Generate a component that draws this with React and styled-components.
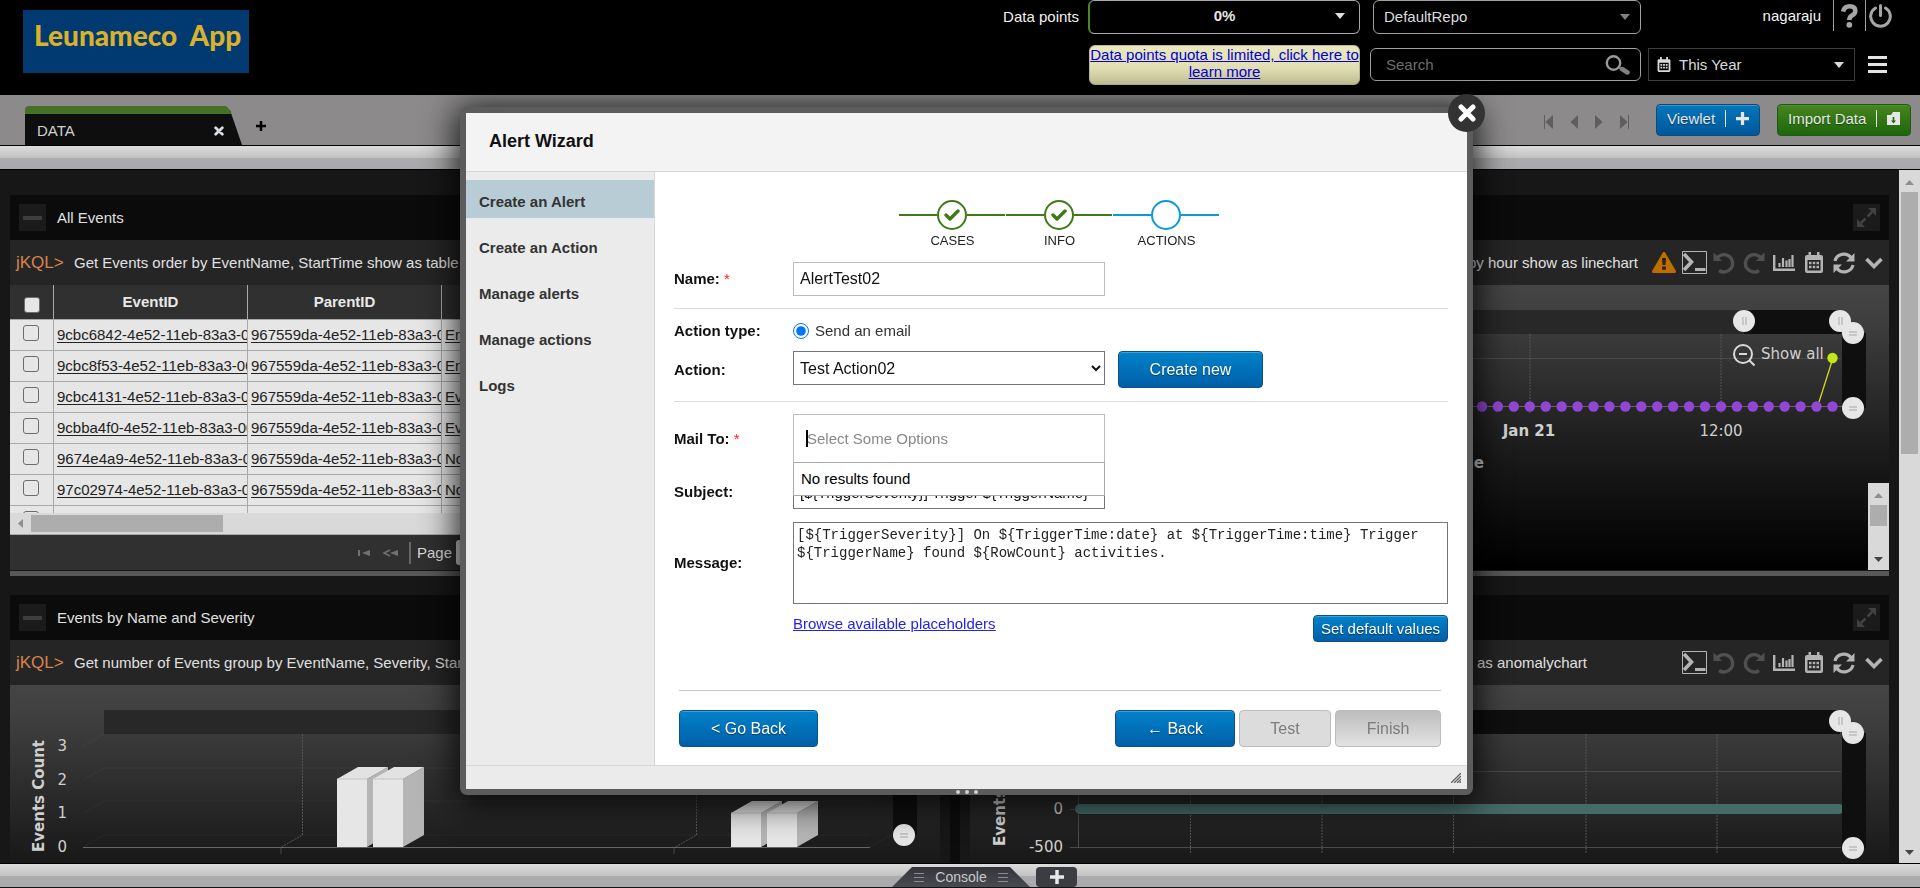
import React from "react";
import styled, { createGlobalStyle, css } from "styled-components";

const GlobalStyle = createGlobalStyle`
  *, *::before, *::after { box-sizing: border-box; }
  body {
    margin: 0;
    background: #171717;
    font: 15px/18px "Liberation Sans", Arial, sans-serif;
    color: #111;
  }
  button, input, select, textarea { font: inherit; margin: 0; }
`;

const band = "linear-gradient(#dcdcdc 0, #c2c2c2 12px, #acacae 12px, #a9a9ab 24px)";

const Page = styled.div`
  display: flex;
  flex-direction: column;
  height: 100vh;
  overflow: hidden;
`;

/* ---------- header ---------- */

const Header = styled.header`
  display: flex;
  flex: none;
  height: 95px;
  background: #000;
  color: #f2f2f2;
`;

const Logo = styled.div`
  width: 226px;
  height: 63px;
  margin: 10px auto 0 23px;
  padding: 8px 0 0 11px;
  background: #003a70;
  color: #d9b12c;
  font: 900 28px/34px Lato, "Open Sans", sans-serif;
  white-space: pre;
`;

const PointsLabel = styled.div`
  padding: 8px 9px 0 0;
`;

const HeaderColumn = styled.div`
  display: flex;
  flex-direction: column;
  align-items: flex-end;
  width: ${(p) => p.$width}px;
  margin-right: ${(p) => p.$gap || 0}px;
`;

const Meter = styled.button`
  display: flex;
  align-items: center;
  width: 100%;
  height: 34px;
  padding: 0 14px 2px 24px;
  border: 1px solid #a8a8a8;
  border-left: 2px solid #4d8a26;
  border-radius: 6px;
  background: #000;
  color: #e6e6e6;
  font-weight: bold;
  span { flex: 1; }
`;

const Notice = styled.a`
  width: 271px;
  height: 40px;
  margin-top: 11px;
  border: 1px solid #b9b99a;
  border-radius: 6px;
  background: linear-gradient(#e9e8bb, #e2deb4 60%, #c9c79c);
  color: #0000d8;
  line-height: 17px;
  text-align: center;
`;

const Field = styled.div`
  display: flex;
  align-items: center;
  width: ${(p) => p.$width};
  height: ${(p) => p.$height}px;
  margin-top: ${(p) => p.$top || 0}px;
  padding: 0 10px 0 ${(p) => p.$left || 10}px;
  border: 1px solid ${(p) => p.$line || "#a0a0a0"};
  border-radius: ${(p) => (p.$square ? 0 : 6)}px;
  select, input {
    flex: 1;
    min-width: 0;
    padding: 0;
    border: 0;
    outline: 0;
    appearance: none;
    background: #000;
    color: #dcdcdc;
  }
  input::placeholder { color: #6e6e6e; }
`;

const UserRow = styled.div`
  display: flex;
  align-items: center;
  height: 31px;
  padding-right: 25px;
`;

const UserName = styled.span`
  padding-right: 12px;
`;

const HeaderIcon = styled.button`
  display: flex;
  align-items: center;
  justify-content: center;
  width: ${(p) => p.$width}px;
  height: 31px;
  padding: 0;
  border: 0;
  border-left: 1px solid #a0a0a0;
  background: none;
`;

const DateRow = styled.div`
  display: flex;
  align-items: center;
  width: 100%;
  margin-top: 17px;
`;

const DateField = styled(Field)`
  gap: 8px;
`;

const MenuButton = styled.button`
  display: flex;
  flex-direction: column;
  gap: 4px;
  width: 19px;
  margin-left: 13px;
  padding: 0;
  border: 0;
  background: none;
  i { height: 3px; background: #e4e4e4; }
`;

/* ---------- tab bar ---------- */

const TabBar = styled.nav`
  display: flex;
  flex: none;
  height: 51px;
  padding: 0 9px 0 25px;
  border-bottom: 1px solid #000;
  background: #8c8a8b;
`;

const Tab = styled.div`
  display: flex;
  align-items: center;
  justify-content: space-between;
  width: 217px;
  height: 39px;
  margin-top: 11px;
  padding: 2px 18px 0 12px;
  border-top: 8px solid #457126;
  border-radius: 4px 0 0 0;
  background: #0e0e0e;
  clip-path: polygon(0 0, calc(100% - 16px) 0, calc(100% - 12px) 4px, 100% 100%, 0 100%);
  color: #d0d0d0;
`;

const PlainButton = styled.button`
  display: flex;
  padding: 0;
  border: 0;
  background: none;
`;

const AddTab = styled(PlainButton)`
  align-self: center;
  margin: 12px auto 0 14px;
`;

const Pager = styled.div`
  display: flex;
  align-items: center;
  gap: 15px;
  margin: 4px 27px 0 0;
`;

const BarButton = styled.button`
  display: flex;
  align-items: center;
  justify-content: space-between;
  width: ${(p) => p.$width}px;
  height: 32px;
  margin: 9px 0 0 ${(p) => p.$gap || 0}px;
  padding: 0 10px 3px;
  border: 1px solid ${(p) => (p.$green ? "#1d5c10" : "#0d4a7c")};
  border-radius: 4px;
  background: ${(p) => (p.$green ? "linear-gradient(#47861f, #1d650c)" : "linear-gradient(#0577bb, #00579b)")};
  box-shadow: inset 0 1px ${(p) => (p.$green ? "#4f8f2c" : "#3d94d2")};
  color: #e6e6e6;
  text-shadow: 0 1px 1px rgba(0, 0, 0, 0.4);
`;

const BarDivider = styled.i`
  width: 1px;
  height: 17px;
  background: #e6e6e6;
`;

const Band = styled.div`
  flex: none;
  height: 23px;
  background: ${band};
`;

/* ---------- dashboard ---------- */

const Workspace = styled.main`
  display: flex;
  flex: 1;
  min-height: 0;
  border-top: 1px solid #000;
  background: #171717;
`;

const Dashboard = styled.div`
  display: grid;
  flex: 1;
  grid-template-columns: minmax(0, 930fr) 30px minmax(0, 919fr);
  min-width: 0;
  padding: 25px 10px 0;
  overflow: hidden;
`;

const PanelColumn = styled.div`
  display: flex;
  flex-direction: column;
  gap: 19px;
`;

const Splitter = styled.div`
  width: 10px;
  margin: -25px auto 0;
  background: #0c0c0c;
`;

const Panel = styled.section`
  flex: none;
  border-bottom: 5px solid #585858;
`;

const PanelHead = styled.header`
  display: flex;
  align-items: center;
  gap: 11px;
  height: 45px;
  padding: 0 9px;
  background: #0b0b0b;
  color: #e0e0e0;
`;

const HeadTitle = styled.h2`
  margin: 0 auto 0 0;
  font-size: 15px;
  font-weight: normal;
`;

const HeadButton = styled.button`
  display: flex;
  align-items: center;
  justify-content: center;
  width: 27px;
  height: 27px;
  padding: 0;
  border: 0;
  background: #1b1b1b;
`;

const Query = styled.div`
  display: flex;
  align-items: center;
  height: 45px;
  padding-left: 6px;
  background: #252525;
  color: #e0e0e0;
  white-space: nowrap;
`;

const Prompt = styled.span`
  width: 58px;
  color: #d9834e;
  font-size: 17px;
`;

const QueryEnd = styled.span`
  flex: 1;
  padding-right: ${(p) => p.$gap}px;
  text-align: right;
`;

const ToolButton = styled(PlainButton)`
  align-items: center;
  justify-content: center;
  width: 30px;
  height: 45px;
`;

const PanelBody = styled.div`
  display: flex;
  flex-direction: column;
  align-items: ${(p) => (p.$end ? "flex-end" : "stretch")};
  height: 286px;
  overflow: hidden;
  border-bottom: 1px solid #171717;
  background: linear-gradient(#444, #404040 10%, #1a1a1a 60%, #000);
  svg { flex: none; }
`;

const TableClip = styled.div`
  height: 228px;
  overflow: hidden;
  background: #e6e6e6;
`;

const Table = styled.table`
  width: 100%;
  border-collapse: separate;
  border-spacing: 0;
  table-layout: fixed;
  th, td {
    padding: 0 3px;
    border-right: 1px solid #a9a9a9;
    border-bottom: 1px solid #a9a9a9;
    overflow: hidden;
    white-space: nowrap;
    text-align: left;
  }
  th {
    height: 35px;
    background: #303030;
    color: #e8e8e8;
    text-align: center;
  }
  td { height: 31px; color: #222; }
  a { color: inherit; text-underline-offset: 2px; }
`;

const Tick = styled.input`
  appearance: none;
  display: block;
  width: 16px;
  height: 16px;
  margin: ${(p) => (p.$head ? "6px 0 0 11px" : "0 0 4px 10px")} !important;
  border: 1px solid #6c6c6c;
  border-radius: 3px;
  background: #e6e6e6;
`;

const HScroll = styled.div`
  display: flex;
  align-items: center;
  gap: 8px;
  height: 22px;
  padding: 0 8px;
  border-bottom: 1px solid #a9a9a9;
  background: #d9d9d9;
  i { width: 192px; height: 17px; background: #adadad; }
`;

const TablePager = styled.div`
  display: flex;
  align-items: center;
  flex: 1;
  padding-left: 348px;
  background: #303030;
  color: #dadada;
  label { display: flex; align-items: center; gap: 4px; }
  input {
    width: 40px;
    height: 25px;
    border: 0;
    border-radius: 3px;
    background: #d9d9d9;
  }
`;

const PagerRule = styled.i`
  width: 2px;
  height: 22px;
  margin: 0 6px 0 11px;
  background: #666;
`;

const VScroll = styled.div`
  display: flex;
  flex-direction: column;
  align-items: center;
  flex: none;
  width: 21px;
  padding: 10px 2px 8px;
  background: #d9d9d9;
  i {
    width: 17px;
    height: ${(p) => p.$thumb}px;
    margin: 7px 0 auto;
    background: #adadad;
  }
`;

const InnerScroll = styled(VScroll)`
  align-self: flex-end;
  height: 87px;
`;

/* ---------- console bar ---------- */

const ConsoleBar = styled.footer`
  display: flex;
  flex: none;
  justify-content: center;
  gap: 6px;
  height: 25px;
  padding: 3px 0 0 49px;
  border-top: 1px solid #000;
  border-bottom: 1px solid #111;
  background: ${band};
`;

const ConsoleTab = styled.button`
  display: flex;
  align-items: center;
  justify-content: center;
  gap: 11px;
  width: 138px;
  height: 20px;
  padding: 0;
  border: 0;
  background: linear-gradient(#33353a, #484b51);
  clip-path: polygon(20px 0, calc(100% - 20px) 0, 100% 100%, 0 100%);
  color: #c9c9c9;
  font-size: 14px;
`;

const ConsoleAdd = styled(PlainButton)`
  align-items: center;
  justify-content: center;
  width: 41px;
  height: 20px;
  border-radius: 4px;
  background: #3b3d42;
`;

/* ---------- dialog ---------- */

const Overlay = styled.div`
  position: fixed;
  inset: 0;
  display: flex;
  align-items: flex-start;
  justify-content: center;
  padding: 107px 0 0 13px;
`;

const Dialog = styled.div`
  position: relative;
  width: 1013px;
  border: 6px solid #5c5c5c;
  border-radius: 7px;
  background: #fff;
  box-shadow: 0 4px 34px 4px rgba(0, 0, 0, 0.85);
`;

const CloseButton = styled.button`
  position: absolute;
  top: -19px;
  right: -18px;
  display: flex;
  align-items: center;
  justify-content: center;
  width: 37px;
  height: 38px;
  padding: 0;
  border: 0;
  border-radius: 50%;
  background: #333;
`;

const Grip = styled.div`
  position: absolute;
  bottom: -5px;
  left: 0;
  right: 0;
  display: flex;
  justify-content: center;
  gap: 5px;
  i { width: 4px; height: 4px; border-radius: 2px; background: #d0d0d0; }
`;

const DialogHead = styled.header`
  height: 59px;
  padding: 18px 23px;
  border-bottom: 1px solid #d6d6d6;
  background: #f3f3f3;
  h1 { margin: 0; font-size: 18px; line-height: 20px; }
`;

const DialogBody = styled.div`
  display: flex;
`;

const SideMenu = styled.nav`
  display: flex;
  flex-direction: column;
  gap: 8px;
  width: 189px;
  padding-top: 8px;
  border-right: 1px solid #d6d6d6;
  background: #ebebeb;
`;

const MenuLink = styled.a`
  height: 38px;
  padding: 13px 13px 0;
  background: ${(p) => (p.$active ? "#b8ccd6" : "none")};
  color: #333;
  font-weight: bold;
  text-decoration: none;
`;

const Form = styled.form`
  flex: 1;
  padding: 28px 19px 18px;
`;

const Steps = styled.ol`
  display: flex;
  justify-content: center;
  margin: 0 0 13px;
  padding: 0 3px 0 0;
  list-style: none;
`;

const Step = styled.li`
  width: 107px;
  font-size: 13px;
  line-height: 16px;
  text-align: center;
  color: #222;
`;

const StepMark = styled.div`
  display: flex;
  align-items: center;
  height: 30px;
  margin-bottom: 3px;
  color: ${(p) => (p.$done ? "#3f7a17" : "#0a9adb")};
  &::before, &::after {
    content: "";
    flex: 1;
    height: 2px;
    background: currentColor;
  }
  &::after { margin-right: 1px; }
  span {
    display: flex;
    align-items: center;
    justify-content: center;
    width: 30px;
    height: 30px;
    border: 2px solid currentColor;
    border-radius: 50%;
  }
`;

const Row = styled.div`
  display: grid;
  grid-template-columns: 119px minmax(0, 1fr);
  align-items: center;
  min-height: ${(p) => p.$height}px;
  margin-top: ${(p) => p.$top || 0}px;
`;

const Caption = styled.label`
  font-weight: bold;
  em { color: #f22; font-style: normal; font-weight: normal; }
`;

const Rule = styled.hr`
  height: 1px;
  margin: ${(p) => p.$margin};
  border: 0;
  background: ${(p) => p.$color || "#dcdcdc"};
`;

const controlBox = css`
  width: 312px;
  height: 34px;
  border: 1px solid ${(p) => p.$line || "#767676"};
  border-radius: 0;
  background: #fff;
  color: #111;
`;

const TextInput = styled.input`
  ${controlBox}
  padding: 0 6px;
  font-size: ${(p) => p.$size || 16}px;
`;

const Select = styled.select`
  ${controlBox}
  padding: 0 2px;
  font-size: 16px;
`;

const SelectRow = styled.div`
  display: flex;
  align-items: flex-start;
  gap: 13px;
`;

const RadioLabel = styled.label`
  display: flex;
  align-items: center;
  gap: 6px;
  color: #333;
  input { width: 16px; height: 16px; }
`;

const Chosen = styled.div`
  position: relative;
  display: flex;
  align-items: center;
  width: 312px;
  height: 49px;
  padding-left: 12px;
  border: 1px solid #bcbcbc;
  input {
    flex: 1;
    padding: 0;
    border: 0;
    outline: 0;
    background: none;
    caret-color: transparent;
  }
  input::placeholder { color: #888; }
`;

const TextCaret = styled.i`
  width: 2px;
  height: 17px;
  margin-right: -1px;
  background: #000;
`;

const Results = styled.div`
  position: absolute;
  z-index: 1;
  top: 47px;
  left: -1px;
  right: -1px;
  height: 34px;
  padding: 7px;
  border: 1px solid #aaa;
  background: #fff;
  color: #000;
`;

const Message = styled.textarea`
  display: block;
  width: 100%;
  height: 82px;
  padding: 3px;
  border: 1px solid #767676;
  resize: none;
  background: #fff;
  color: #222;
  font: 14px/18px "Liberation Mono", monospace;
`;

const HelpRow = styled.div`
  display: flex;
  align-items: flex-start;
  justify-content: space-between;
  margin: 11px 0 0 119px;
  a { color: #22e; }
`;

const Button = styled.button`
  width: ${(p) => p.$width}px;
  height: ${(p) => (p.$small ? 27 : 37)}px;
  padding: 0;
  border: 1px solid #0d4f86;
  border-radius: 4px;
  background: linear-gradient(#0083ca, #005fa8);
  box-shadow: inset 0 1px #3ea0e4;
  color: #fff;
  font-size: ${(p) => (p.$small ? 15 : 16)}px;
  text-shadow: 0 1px 1px rgba(0, 0, 0, 0.5);
  &:disabled {
    border-color: #bcbcbc;
    background: ${(p) => (p.$shaded ? "linear-gradient(#bdbdbd, #e2e2e2)" : "#dcdcdc")};
    box-shadow: none;
    color: #7c7c7c;
    text-shadow: none;
  }
`;

const Actions = styled.div`
  display: flex;
  gap: 4px;
  padding: 0 7px 0 5px;
  button:first-child { margin-right: auto; }
`;

const DialogFoot = styled.footer`
  display: flex;
  align-items: center;
  justify-content: flex-end;
  height: 24px;
  padding-right: 6px;
  border-top: 1px solid #d6d6d6;
  background: #ebebeb;
`;

/* ---------- icons ---------- */

const Caret = ({ color = "#e0e0e0" }) => (
  <svg width="10" height="6" viewBox="0 0 10 6"><path d="M0 0h10L5 6z" fill={color} /></svg>
);

const Plus = ({ size, color, w = 2 }) => (
  <svg width={size} height={size} viewBox="0 0 12 12">
    <path d="M6 0v12M0 6h12" stroke={color} strokeWidth={w} fill="none" />
  </svg>
);

const Cross = ({ size, color }) => (
  <svg width={size} height={size} viewBox="0 0 18 18">
    <path d="M3 3l12 12M15 3L3 15" stroke={color} strokeWidth="5" strokeLinecap="round" fill="none" />
  </svg>
);

const Arrow = ({ up, color = "#8e8e8e" }) => (
  <svg width="9" height="5" viewBox="0 0 9 5">
    <path d={up ? "M0 5h9L4.500 0z" : "M0 0h9L4.500 5z"} fill={color} />
  </svg>
);

const CalendarIcon = ({ width, height, color }) => (
  <svg width={width} height={height} viewBox="0 0 18 21">
    <path d="M2 3h14q2 0 2 2v14q0 2-2 2H2q-2 0-2-2V5q0-2 2-2zM2.500 8v10.500h13V8z" fillRule="evenodd" fill={color} />
    <path d="M3.500 0h2.500v4h-2.500zM12 0h2.500v4H12z" fill={color} />
    <path d="M4 11h10M4 15h10" stroke={color} strokeWidth="2.500" strokeDasharray="2.500 1.250" />
  </svg>
);

const SearchIcon = () => (
  <svg width="25" height="20" viewBox="0 0 25 20">
    <circle cx="8.500" cy="8" r="6.700" fill="none" stroke="#999" strokeWidth="2.400" />
    <path d="M14 12.500l3 2" stroke="#888" strokeWidth="2" />
    <path d="M17 14l5.500 3.500" stroke="#808080" strokeWidth="4.500" strokeLinecap="round" />
  </svg>
);

const HelpIcon = () => (
  <svg width="17" height="24" viewBox="0 0 17 24">
    <path d="M2 7.500Q3.500 2.300 8.500 2.300q5.800 0 5.800 4.700 0 2.700-3 4.300-3 1.600-3 4.700" fill="none" stroke="#a6a6a6" strokeWidth="4.600" />
    <circle cx="8.300" cy="20.800" r="2.900" fill="#a6a6a6" />
  </svg>
);

const PowerIcon = () => (
  <svg width="23" height="24" viewBox="0 0 23 24">
    <path d="M6.500 4A9.800 9.800 0 1 0 16.500 4" fill="none" stroke="#a6a6a6" strokeWidth="3" strokeLinecap="round" />
    <path d="M11.500 1.500v10" stroke="#a6a6a6" strokeWidth="3" strokeLinecap="round" />
  </svg>
);

const FolderIcon = () => (
  <svg width="13" height="13" viewBox="0 0 13 13">
    <path d="M0 3h4l2-3h7v13H0z" fill="#e6e6e6" />
    <path d="M6.500 5v4" stroke="#1d650c" strokeWidth="1.600" />
    <path d="M4 8.500h5l-2.500 3z" fill="#1d650c" />
  </svg>
);

const NavIcon = ({ edge, back }) => (
  <svg width="10" height="14" viewBox="0 0 10 14">
    <g transform={back ? undefined : "matrix(-1 0 0 1 10 0)"} fill="#5e5e5e">
      <path d="M9 0v14L1.500 7z" />
      {edge && <path d="M0 0h1v14H0z" />}
    </g>
  </svg>
);

const WarningIcon = () => (
  <svg width="24" height="21" viewBox="0 0 24 21">
    <path d="M12 1.500L22.500 19.500h-21z" fill="#bf6c00" stroke="#bf6c00" strokeWidth="3" strokeLinejoin="round" />
    <path d="M10 6h4l-.6 7h-2.800zM10.200 14.500h3.600v3.200h-3.600z" fill="#222" />
  </svg>
);

const ConsoleIcon = () => (
  <svg width="25" height="23" viewBox="0 0 25 23">
    <path d="M.5.500h24v22H.500z" fill="none" stroke="#b4b4b4" />
    <path d="M2 3l7.500 8L2 19" fill="none" stroke="#b4b4b4" strokeWidth="3.600" />
    <path d="M13 18.500h10.500" stroke="#b4b4b4" strokeWidth="3" />
  </svg>
);

const UndoIcon = ({ flip }) => (
  <svg width="22" height="22" viewBox="0 0 22 22">
    <g transform={flip ? "matrix(-1 0 0 1 22 0)" : undefined}>
      <path d="M4.500 5.500A8.700 8.700 0 1 1 6 18.500" fill="none" stroke="#505050" strokeWidth="3.400" />
      <path d="M.500.500v8.500h8.500z" fill="#505050" />
    </g>
  </svg>
);

const ChartIcon = () => (
  <svg width="22" height="16" viewBox="0 0 22 16">
    <path d="M1.200 0v14.700h20.800" fill="none" stroke="#b4b4b4" strokeWidth="2.400" />
    <path d="M6.500 12V8M10 12V3M13.500 12V5.500M16.500 12V4M19.500 12V0" stroke="#b4b4b4" strokeWidth="2.200" />
  </svg>
);

const RefreshIcon = () => (
  <svg width="22" height="22" viewBox="0 0 22 22">
    <path d="M2 9A9 8.500 0 0 1 18 5.500M20 13A9 8.500 0 0 1 4 16.500" fill="none" stroke="#b4b4b4" strokeWidth="3.200" />
    <path d="M21.500 1v8.500H13zM.500 21v-8.500H9z" fill="#b4b4b4" />
  </svg>
);

const ChevronIcon = () => (
  <svg width="18" height="12" viewBox="0 0 18 12">
    <path d="M1.500 2L9 9.500 16.500 2" fill="none" stroke="#b4b4b4" strokeWidth="3.600" />
  </svg>
);

const MinusIcon = () => (
  <svg width="19" height="4" viewBox="0 0 19 4"><rect width="19" height="4" rx="1" fill="#3e3e3e" /></svg>
);

const ExpandIcon = () => (
  <svg width="19" height="19" viewBox="0 0 19 19">
    <path d="M11 0h8v8zM0 11v8h8z" fill="#424242" />
    <path d="M15 4l-4.500 4.500M8.500 10.500L4 15" stroke="#424242" strokeWidth="2.600" />
  </svg>
);

const CheckIcon = () => (
  <svg width="16" height="12" viewBox="0 0 16 12">
    <path d="M2 6l4 4 8-8" fill="none" stroke="#3f7a17" strokeWidth="3.400" strokeLinecap="round" strokeLinejoin="round" />
  </svg>
);

const HandleIcon = () => (
  <svg width="10" height="10" viewBox="0 0 10 10">
    <path d="M0 10L10 0M3 10l7-7M6 10l4-4M8.500 10L10 8.500" stroke="#666" strokeWidth="1.300" />
  </svg>
);

const LinesIcon = () => (
  <svg width="10" height="9" viewBox="0 0 10 9"><path d="M0 .500h10M0 4.500h10M0 8.500h10" stroke="#8d8d8d" /></svg>
);

/* ---------- charts ---------- */

const Knob = ({ x, y, vertical }) => (
  <g>
    <circle cx={x} cy={y} r="11" fill="#e6e6e6" />
    <path
      d={vertical ? `M${x - 4} ${y - 1}h8M${x - 4} ${y + 2}h8` : `M${x - 1} ${y - 4}v8M${x + 2} ${y - 4}v8`}
      stroke="#a8a8a8"
    />
  </g>
);

const ChartSvg = styled.svg`
  display: block;
  font: 15px "DejaVu Sans", Verdana, sans-serif;
  .grid { stroke: #4a4a4a; fill: none; }
  .dots { stroke: #555; fill: none; stroke-dasharray: 2 1; }
  .faint { stroke: #fff; stroke-opacity: 0.04; fill: none; }
  text { fill: #cfcfcf; }
  .bold { font-weight: bold; }
`;

const Block = ({ x, y }) => (
  <g>
    <path d={`M${x + 30} ${y}l21-12V835l-21 12z`} fill="#b5b5b5" />
    <path d={`M${x} ${y}l21-12h30l-21 12z`} fill="#e2e2e2" />
    <path d={`M${x} ${y}h30V847h-30z`} fill="#e6e6e6" />
    <path d={`M${x} ${y}h30`} stroke="#c4c4c4" />
  </g>
);

const Bar3D = ({ x, y }) => (
  <g>
    <Block x={x} y={y} />
    <Block x={x + 36} y={y} />
  </g>
);

const CountChart = () => (
  <ChartSvg width="930" height="285" viewBox="10 685 930 285">
    <rect x="104" y="710" width="776" height="24" fill="#282828" />
    <path className="faint" d="M83 746l21-12M83 780l21-12h766M83 813l21-12h766M83 847l21-12h766" />
    <path className="faint" d="M870 847l21-12" />
    <path className="dots" d="M302.500 734v101l-21 12M696.500 734v101l-21 12" />
    <path className="grid" d="M281 847v7M674 847v7" />
    <Bar3D x={337} y={779} />
    <Bar3D x={731} y={813} />
    <path d="M83 847.500h787" stroke="#666" />
    <rect x="893" y="734" width="24" height="101" fill="#0f0f0f" />
    <Knob x={904} y={835} vertical />
    <g textAnchor="end">
      <text x="67" y="751">3</text>
      <text x="67" y="785">2</text>
      <text x="67" y="818">1</text>
      <text x="67" y="852">0</text>
    </g>
    <text className="bold" transform="translate(44 852) rotate(-90)">Events Count</text>
  </ChartSvg>
);

const LineChart = () => (
  <ChartSvg width="919" height="198" viewBox="970 285 919 198">
    <rect x="1060" y="310" width="684" height="24" fill="#282828" />
    <rect x="1744" y="310" width="97" height="24" fill="#0f0f0f" />
    <path className="grid" d="M1060 358.500h781" />
    <path className="dots" d="M1530 334v79M1721 334v79" />
    <path d="M1060 406.500h784" stroke="#6d6060" />
    {Array.from({ length: 23 }, (_, i) => (
      <circle key={i} cx={1482 + i * 15.93} cy="406.500" r="5.200" fill="#9246d8" />
    ))}
    <path d="M1819 402l14-44" stroke="#d6d624" strokeWidth="1.300" />
    <circle cx="1832.500" cy="358" r="5.200" fill="#c4e617" />
    <rect x="1842" y="333" width="24" height="75" fill="#0f0f0f" />
    <Knob x={1744} y={321} />
    <Knob x={1840} y={321} />
    <Knob x={1853} y={333} vertical />
    <Knob x={1853} y={408} vertical />
    <g fill="none" stroke="#d9d9d9" strokeWidth="2">
      <circle cx="1743" cy="354" r="9" />
      <path d="M1739 354h8M1749.500 360.500l5 5" />
    </g>
    <text x="1761" y="359">Show all</text>
    <text className="bold" x="1529" y="436" textAnchor="middle">Jan 21</text>
    <text x="1721" y="436" textAnchor="middle">12:00</text>
    <text className="bold" x="1484" y="468" textAnchor="end">Time</text>
  </ChartSvg>
);

const AnomalyChart = () => (
  <ChartSvg width="919" height="285" viewBox="970 685 919 285">
    <rect x="1078" y="710" width="762" height="24" fill="#0f0f0f" />
    <path className="grid" d="M1078.500 734v114M1078 771.500h763M1070 847.500h771" />
    <path className="dots" d="M1190.500 734v119M1322 734v119M1453.500 734v119M1586 734v119M1717 734v119" />
    <rect x="1075" y="804" width="769" height="10" rx="5" fill="#456b67" />
    <path className="grid" d="M1070 809.500h6" />
    <rect x="1842" y="733" width="24" height="115" fill="#0f0f0f" />
    <Knob x={1840} y={721} />
    <Knob x={1853} y={733} vertical />
    <Knob x={1853} y={848} vertical />
    <text x="1063" y="814" textAnchor="end">0</text>
    <text x="1063" y="852" textAnchor="end">-500</text>
    <text className="bold" transform="translate(1005 846) rotate(-90)">Events</text>
  </ChartSvg>
);

/* ---------- page parts ---------- */

const rows = [
  ["9cbc6842-4e52-11eb-83a3-00", "En"],
  ["9cbc8f53-4e52-11eb-83a3-00", "En"],
  ["9cbc4131-4e52-11eb-83a3-00", "Ev"],
  ["9cbba4f0-4e52-11eb-83a3-00", "Ev"],
  ["9674e4a9-4e52-11eb-83a3-00", "No"],
  ["97c02974-4e52-11eb-83a3-00", "No"],
];

const Tools = ({ warning }) => (
  <>
    {warning && <ToolButton aria-label="Warning"><WarningIcon /></ToolButton>}
    <ToolButton aria-label="Console"><ConsoleIcon /></ToolButton>
    <ToolButton aria-label="Undo"><UndoIcon /></ToolButton>
    <ToolButton aria-label="Redo"><UndoIcon flip /></ToolButton>
    <ToolButton aria-label="Chart type"><ChartIcon /></ToolButton>
    <ToolButton aria-label="Dates"><CalendarIcon width={18} height={21} color="#b4b4b4" /></ToolButton>
    <ToolButton aria-label="Refresh"><RefreshIcon /></ToolButton>
    <ToolButton aria-label="More"><ChevronIcon /></ToolButton>
  </>
);

const LeftPanel = ({ title, query, children }) => (
  <Panel>
    <PanelHead>
      <HeadButton aria-label="Collapse"><MinusIcon /></HeadButton>
      <HeadTitle>{title}</HeadTitle>
    </PanelHead>
    <Query><Prompt>jKQL&gt;</Prompt>{query}</Query>
    <PanelBody>{children}</PanelBody>
  </Panel>
);

const RightPanel = ({ query, gap, warning, children }) => (
  <Panel>
    <PanelHead>
      <HeadTitle />
      <HeadButton aria-label="Expand"><ExpandIcon /></HeadButton>
    </PanelHead>
    <Query><QueryEnd $gap={gap}>{query}</QueryEnd><Tools warning={warning} /></Query>
    <PanelBody $end>{children}</PanelBody>
  </Panel>
);

const EventsTable = () => (
  <>
    <TableClip>
      <Table>
        <colgroup>
          <col width="44" /><col width="194" /><col width="194" /><col />
        </colgroup>
        <thead>
          <tr>
            <th><Tick type="checkbox" $head aria-label="Select all" /></th>
            <th>EventID</th>
            <th>ParentID</th>
            <th />
          </tr>
        </thead>
        <tbody>
          {rows.map(([id, name]) => (
            <tr key={id}>
              <td><Tick type="checkbox" aria-label={id} /></td>
              <td><a href="#event">{id}</a></td>
              <td><a href="#parent">967559da-4e52-11eb-83a3-00</a></td>
              <td><a href="#name">{name}</a></td>
            </tr>
          ))}
          <tr>
            <td><Tick type="checkbox" aria-label="Select row" /></td>
            <td /><td /><td />
          </tr>
        </tbody>
      </Table>
    </TableClip>
    <HScroll>
      <svg width="5" height="9" viewBox="0 0 5 9"><path d="M5 0v9L0 4.500z" fill="#8e8e8e" /></svg>
      <i />
    </HScroll>
    <TablePager>
      <svg width="40" height="8" viewBox="0 0 40 8" fill="#707070">
        <path d="M0 1h2v6H0zM12 1v6L4 4zM40 1v6l-8-3z" />
        <path d="M32 1l-6 3 6 3" fill="none" stroke="#707070" strokeWidth="1.500" />
      </svg>
      <PagerRule />
      <label>Page <input aria-label="Page number" /></label>
    </TablePager>
  </>
);

const steps = [["CASES", true], ["INFO", true], ["ACTIONS", false]];
const menu = ["Create an Alert", "Create an Action", "Manage alerts", "Manage actions", "Logs"];

const AlertWizard = () => (
  <Overlay>
    <Dialog role="dialog" aria-labelledby="wizard-title">
      <DialogHead><h1 id="wizard-title">Alert Wizard</h1></DialogHead>
      <DialogBody>
        <SideMenu>
          {menu.map((item, i) => (
            <MenuLink key={item} href="#menu" $active={i === 0}>{item}</MenuLink>
          ))}
        </SideMenu>
        <Form onSubmit={(e) => e.preventDefault()}>
          <Steps>
            {steps.map(([name, done]) => (
              <Step key={name}>
                <StepMark $done={done}><span>{done && <CheckIcon />}</span></StepMark>
                {name}
              </Step>
            ))}
          </Steps>
          <Row $height={34}>
            <Caption htmlFor="name">Name: <em>*</em></Caption>
            <TextInput id="name" defaultValue="AlertTest02" $line="#bcbcbc" />
          </Row>
          <Rule $margin="12px 0 11px" />
          <Row $height={22}>
            <Caption as="span">Action type:</Caption>
            <RadioLabel><input type="radio" name="type" defaultChecked />Send an email</RadioLabel>
          </Row>
          <Row $height={37} $top={9}>
            <Caption htmlFor="action">Action:</Caption>
            <SelectRow>
              <Select id="action"><option>Test Action02</option></Select>
              <Button type="button" $width={145}>Create new</Button>
            </SelectRow>
          </Row>
          <Rule $margin="13px 0 12px" />
          <Row $height={49}>
            <Caption htmlFor="mail">Mail To: <em>*</em></Caption>
            <Chosen>
              <TextCaret />
              <input id="mail" placeholder="Select Some Options" />
              <Results>No results found</Results>
            </Chosen>
          </Row>
          <Row $height={34} $top={12}>
            <Caption htmlFor="subject">Subject:</Caption>
            <TextInput id="subject" $size={15} defaultValue={"[${TriggerSeverity}] Trigger ${TriggerName}"} />
          </Row>
          <Row $height={82} $top={13}>
            <Caption htmlFor="message">Message:</Caption>
            <Message
              id="message"
              defaultValue={"[${TriggerSeverity}] On ${TriggerTime:date} at ${TriggerTime:time} Trigger ${TriggerName} found ${RowCount} activities."}
            />
          </Row>
          <HelpRow>
            <a href="#placeholders">Browse available placeholders</a>
            <Button type="button" $small $width={135}>Set default values</Button>
          </HelpRow>
          <Rule $margin="48px 7px 19px 5px" $color="#c8c8c8" />
          <Actions>
            <Button type="button" $width={139}>&lt; Go Back</Button>
            <Button type="button" $width={120}>← Back</Button>
            <Button type="button" $width={92} disabled>Test</Button>
            <Button type="button" $width={106} disabled $shaded>Finish</Button>
          </Actions>
        </Form>
      </DialogBody>
      <DialogFoot><HandleIcon /></DialogFoot>
      <Grip><i /><i /><i /></Grip>
      <CloseButton aria-label="Close"><Cross size={18} color="#fff" /></CloseButton>
    </Dialog>
  </Overlay>
);

export default function App() {
  return (
    <Page>
      <GlobalStyle />
      <Header>
        <Logo>{"Leunameco  App"}</Logo>
        <PointsLabel>Data points</PointsLabel>
        <HeaderColumn $width={272} $gap={10}>
          <Meter><span>0%</span><Caret /></Meter>
          <Notice href="#quota">Data points quota is limited, click here to learn more</Notice>
        </HeaderColumn>
        <HeaderColumn $width={271} $gap={7}>
          <Field $width="268px" $height={34} $left={10}>
            <select aria-label="Repository"><option>DefaultRepo</option></select>
            <Caret color="#808080" />
          </Field>
          <Field $width="271px" $height={33} $top={14} $left={15}>
            <input aria-label="Search" placeholder="Search" />
            <SearchIcon />
          </Field>
        </HeaderColumn>
        <HeaderColumn $width={272}>
          <UserRow>
            <UserName>nagaraju</UserName>
            <HeaderIcon $width={32} aria-label="Help"><HelpIcon /></HeaderIcon>
            <HeaderIcon $width={30} aria-label="Log out"><PowerIcon /></HeaderIcon>
          </UserRow>
          <DateRow>
            <DateField $width="207px" $height={33} $left={8} $line="#3c3c3c" $square>
              <CalendarIcon width={14} height={15} color="#dadada" />
              <select aria-label="Date range"><option>This Year</option></select>
              <Caret color="#dadada" />
            </DateField>
            <MenuButton aria-label="Menu"><i /><i /><i /></MenuButton>
          </DateRow>
        </HeaderColumn>
      </Header>
      <TabBar>
        <Tab>DATA<PlainButton aria-label="Close tab"><Cross size={10} color="#d6dce0" /></PlainButton></Tab>
        <AddTab aria-label="Add tab"><Plus size={10} color="#000" w={3} /></AddTab>
        <Pager>
          <PlainButton aria-label="First"><NavIcon back edge /></PlainButton>
          <PlainButton aria-label="Previous"><NavIcon back /></PlainButton>
          <PlainButton aria-label="Next"><NavIcon /></PlainButton>
          <PlainButton aria-label="Last"><NavIcon edge /></PlainButton>
        </Pager>
        <BarButton $width={104}>Viewlet<BarDivider /><Plus size={13} color="#e6e6e6" w={3} /></BarButton>
        <BarButton $width={134} $gap={17} $green>Import Data<BarDivider /><FolderIcon /></BarButton>
      </TabBar>
      <Band />
      <Workspace>
        <Dashboard>
          <PanelColumn>
            <LeftPanel title="All Events" query="Get Events order by EventName, StartTime show as table">
              <EventsTable />
            </LeftPanel>
            <LeftPanel title="Events by Name and Severity" query="Get number of Events group by EventName, Severity, StartTime">
              <CountChart />
            </LeftPanel>
          </PanelColumn>
          <Splitter />
          <PanelColumn>
            <RightPanel query="by hour show as linechart" gap={11} warning>
              <LineChart />
              <InnerScroll $thumb={21}><Arrow up /><i /><Arrow color="#444" /></InnerScroll>
            </RightPanel>
            <RightPanel query="as anomalychart" gap={92}>
              <AnomalyChart />
            </RightPanel>
          </PanelColumn>
        </Dashboard>
        <VScroll $thumb={262}><Arrow up /><i /><Arrow color="#444" /></VScroll>
      </Workspace>
      <ConsoleBar>
        <ConsoleTab><LinesIcon />Console<LinesIcon /></ConsoleTab>
        <ConsoleAdd aria-label="Add console"><Plus size={14} color="#e8e8e8" w={3} /></ConsoleAdd>
      </ConsoleBar>
      <AlertWizard />
    </Page>
  );
}
